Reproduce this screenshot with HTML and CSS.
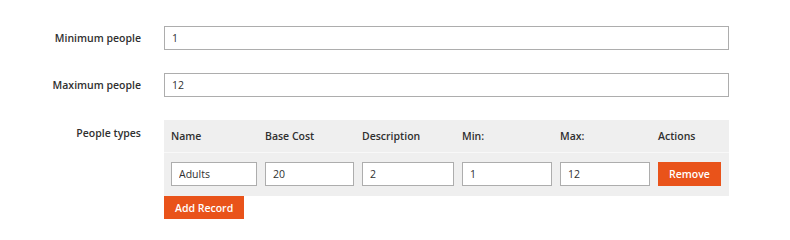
FILE: index.html
```html
<!DOCTYPE html>
<html lang="en">
<head>
  <meta charset="UTF-8">
  <title>People settings</title>
  <link rel="stylesheet" href="styles.css">
</head>
<body>
  <form class="settings">
    <div class="field">
      <label class="field-label" for="minPeople">Minimum people</label>
      <div class="field-control">
        <input class="text-input" type="text" id="minPeople" value="1">
      </div>
    </div>

    <div class="field">
      <label class="field-label" for="maxPeople">Maximum people</label>
      <div class="field-control">
        <input class="text-input" type="text" id="maxPeople" value="12">
      </div>
    </div>

    <div class="field field-top">
      <span class="field-label">People types</span>
      <div class="field-control">
        <table class="rows-table">
          <colgroup>
            <col style="width: 94px">
            <col style="width: 97px">
            <col style="width: 100px">
            <col style="width: 98px">
            <col style="width: 98px">
            <col>
          </colgroup>
          <thead>
            <tr>
              <th>Name</th>
              <th>Base Cost</th>
              <th>Description</th>
              <th>Min:</th>
              <th>Max:</th>
              <th>Actions</th>
            </tr>
          </thead>
          <tbody>
            <tr>
              <td><input class="text-input" type="text" value="Adults"></td>
              <td><input class="text-input" type="text" value="20"></td>
              <td><input class="text-input" type="text" value="2"></td>
              <td><input class="text-input" type="text" value="1"></td>
              <td><input class="text-input" type="text" value="12"></td>
              <td><button type="button" class="btn">Remove</button></td>
            </tr>
          </tbody>
        </table>
        <button type="button" class="btn btn-add">Add Record</button>
      </div>
    </div>
  </form>
</body>
</html>
```

FILE: styles.css
```css
html {
  font-family: "Open Sans", Arial, sans-serif;
  color: #303030;
}

body {
  margin: 0;
  background-color: #fff;
}

.settings {
  padding-top: 26px;
}

/* Label + control rows */
.field {
  display: flex;
  align-items: center;
  gap: 23px;
  margin-bottom: 23px;
}

.field-top {
  align-items: flex-start;
}

.field-label {
  width: 141px;
  flex-shrink: 0;
  text-align: right;
  font-size: 10.5px;
  font-weight: 600;
}

.field-top .field-label {
  padding-top: 6px;
}

.field-control {
  width: 565px;
}

.text-input {
  box-sizing: border-box;
  display: block;
  width: 100%;
  height: 24px;
  margin: 0;
  padding: 0 7px;
  border: 1px solid #adadad;
  border-radius: 0;
  background-color: #fff;
  font-family: inherit;
  font-size: 10.5px;
  color: #303030;
}

/* Dynamic rows table */
.rows-table {
  width: 100%;
  table-layout: fixed;
  border-collapse: separate;
  border-spacing: 0;
  background-color: #efefef;
}

.rows-table th {
  height: 32px;
  padding: 0 1px 0 7px;
  text-align: left;
  font-size: 10.5px;
  font-weight: 600;
  border-bottom: 1px solid #f8f8f8;
}

.rows-table td {
  padding: 9px 1px 10px 7px;
  vertical-align: top;
  font-size: 0;
}

.btn {
  box-sizing: border-box;
  display: block;
  height: 24px;
  padding: 0 11px;
  border: none;
  border-radius: 0;
  background-color: #e9531a;
  color: #fff;
  font-family: inherit;
  font-size: 10.5px;
  font-weight: 600;
  cursor: pointer;
}

.btn-add {
  height: 23px;
}
```
